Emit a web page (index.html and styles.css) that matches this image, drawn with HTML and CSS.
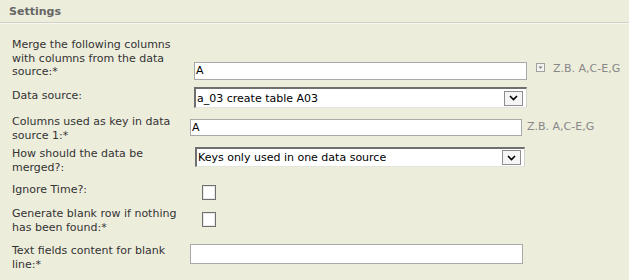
FILE: index.html
```html
<!DOCTYPE html>
<html>
<head>
<meta charset="utf-8">
<link rel="stylesheet" href="styles.css">
</head>
<body>
<div class="panel">
  <div class="header">Settings</div>
  <div class="form">
    <div class="row r1">
      <div class="label">Merge the following columns with columns from the data source:*</div>
      <div class="field f1">
        <div class="input w1">A</div>
        <span class="icon"><svg width="9" height="9" viewBox="0 0 9 9"><rect x="0.5" y="0.5" width="8" height="8" fill="#f4f4f0" stroke="#a0a0a0"/><path d="M2.5 3.5 L6.5 3.5 L4.5 6 Z" fill="#808080"/></svg></span>
        <span class="hint">Z.B. A,C-E,G</span>
      </div>
    </div>
    <div class="row r2">
      <div class="label lp3">Data source:</div>
      <div class="field f2">
        <div class="select w1"><span class="seltext">a_03 create table A03</span><span class="btn"><svg width="9" height="6" viewBox="0 0 9 6"><path d="M1 1 L4.5 4.5 L8 1" fill="none" stroke="#000" stroke-width="1.6"/></svg></span></div>
      </div>
    </div>
    <div class="row r3">
      <div class="label">Columns used as key in data source 1:*</div>
      <div class="field f3">
        <div class="input w3">A</div>
        <span class="hint h3">Z.B. A,C-E,G</span>
      </div>
    </div>
    <div class="row r4">
      <div class="label">How should the data be merged?:</div>
      <div class="field f4">
        <div class="select w4"><span class="seltext">Keys only used in one data source</span><span class="btn"><svg width="9" height="6" viewBox="0 0 9 6"><path d="M1 1 L4.5 4.5 L8 1" fill="none" stroke="#000" stroke-width="1.6"/></svg></span></div>
      </div>
    </div>
    <div class="row r5">
      <div class="label">Ignore Time?:</div>
      <div class="field f5"><span class="check"></span></div>
    </div>
    <div class="row r6">
      <div class="label">Generate blank row if nothing has been found:*</div>
      <div class="field f6"><span class="check"></span></div>
    </div>
    <div class="row r7">
      <div class="label">Text fields content for blank line:*</div>
      <div class="field f7"><div class="input w7"></div></div>
    </div>
  </div>
</div>
</body>
</html>
```
FILE: styles.css
```css
html, body {
  margin: 0;
  padding: 0;
  background: #ededdc;
}
body {
  width: 629px;
  height: 280px;
  overflow: hidden;
  font-family: "DejaVu Sans", sans-serif;
  font-size: 11px;
  color: #333;
}
.header {
  font-weight: bold;
  font-size: 11px;
  color: #666;
  padding: 5px 0 0 9px;
  height: 17px;
  line-height: 14px;
  border-bottom: 1px solid #d2d2ca;
  box-shadow: 0 1px 0 #f7f7ef;
}
.form {
  display: flex;
  flex-direction: column;
  padding-left: 12px;
}
.row {
  display: flex;
  align-items: flex-start;
}
.label {
  width: 166px;
  margin-right: 12px;
  flex: none;
  line-height: 13.5px;
}
.lp3 { padding-top: 2px; }
.field {
  display: flex;
  align-items: flex-start;
}
.r1 { margin-top: 15px; }
.r2 { margin-top: 7px; }
.r3 { margin-top: 7px; }
.r4 { margin-top: 5px; }
.r5 { margin-top: 9px; }
.r6 { margin-top: 7px; }
.r7 { margin-top: 10px; }

.f1 { padding-top: 24px; margin-left: 4px; }
.f2 { margin-left: 4px; }
.f3 { padding-top: 4px; }
.f4 { margin-left: 5px; }
.f5 { padding-top: 2px; margin-left: 12px; }
.f6 { padding-top: 5px; margin-left: 12px; }
.f7 { padding-top: 0; }

.input {
  box-sizing: border-box;
  height: 18px;
  background: #fff;
  border: 1px solid #a9a9a9;
  color: #000;
  line-height: 16px;
  padding-left: 1px;
}
.w1 { width: 333px; }
.w3 { width: 332px; height: 17px; line-height: 15px; }
.w7 { width: 333px; height: 20px; }

.icon {
  display: inline-flex;
  margin: 1px 0 0 9px;
}
.hint {
  color: #888;
  margin-left: 8px;
  line-height: 14px;
}
.h3 {
  margin-left: 5px;
  line-height: 16px;
}
.select {
  box-sizing: border-box;
  height: 21px;
  background: #fff;
  border-top: 2px solid #6f6f6f;
  border-left: 2px solid #6f6f6f;
  border-right: 1px solid #d4d4cc;
  border-bottom: 1px solid #e4e4dc;
  display: flex;
  align-items: center;
  justify-content: space-between;
  color: #000;
  padding-right: 3px;
}
.w4 { width: 330px; height: 20px; }
.seltext {
  padding-left: 1px;
}
.btn {
  box-sizing: border-box;
  width: 19px;
  height: 15px;
  border: 1px solid #8e8e8e;
  background: #f5f5f5;
  display: flex;
  align-items: center;
  justify-content: center;
}
.check {
  display: block;
  box-sizing: border-box;
  width: 14px;
  height: 15px;
  border: 1px solid #707070;
  background: #fff;
  box-shadow: inset 0 0 0 1px #e8e8e8;
}
```
